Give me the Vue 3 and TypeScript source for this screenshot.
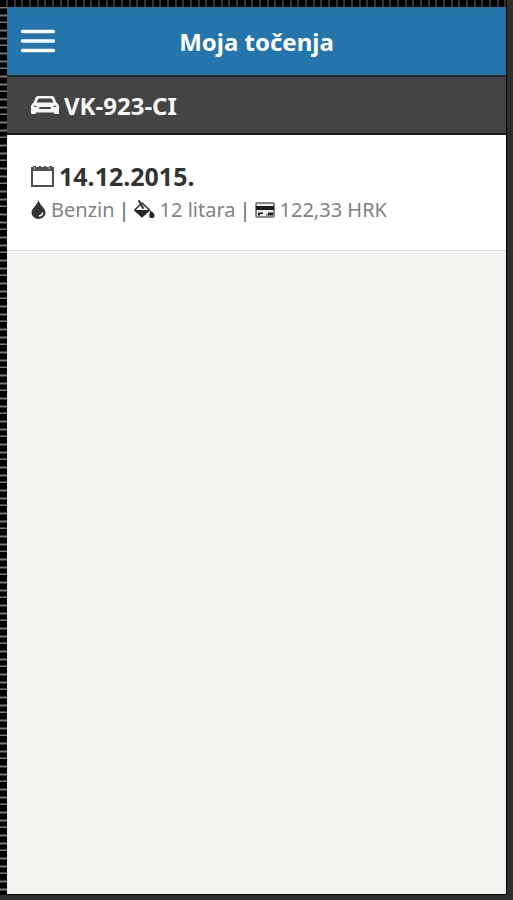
<script setup lang="ts">
import { ref } from 'vue'

interface Refill {
  date: string
  fuel: string
  amount: string
  price: string
}

const title = ref<string>('Moja točenja')
const plate = ref<string>('VK-923-CI')
const refills = ref<Refill[]>([
  { date: '14.12.2015.', fuel: 'Benzin', amount: '12 litara', price: '122,33 HRK' },
])
</script>

<template>
  <div class="frame">
    <div class="screen">
      <header class="bar">
        <button class="menu" type="button" aria-label="Menu">
          <svg width="34" height="24" viewBox="0 0 34 24" aria-hidden="true">
            <path d="M1.500 2.500h31M1.500 12h31M1.500 21.500h31" stroke="#fff" stroke-width="3.400" stroke-linecap="round" />
          </svg>
        </button>
        <h1>{{ title }}</h1>
      </header>
      <h2 class="vehicle">
        <svg width="28" height="20" viewBox="0 0 28 20" aria-hidden="true">
          <path fill="#f4f4f4" fill-rule="evenodd" d="M7 1h14q1.800 0 2.500 1.500l1.500 4.500 2 2q1 1 1 2.500V18q0 1-1 1h-3q-1 0-1-1v-.5H5v.5q0 1-1 1H1q-1 0-1-1v-6.500Q0 10 1 9l2-2 1.500-4.500Q5.200 1 7 1zM7.500 3.500L5.500 7.500h17l-2-4zM2.500 10.500q0 1.600 3.500 1.600 0-1.600-3.500-1.600zM25.500 10.500q-3.500 0-3.500 1.600 3.500 0 3.500-1.600zM9 12q-1 0-1 1t1 1h10q1 0 1-1t-1-1z" />
        </svg>
        <span>{{ plate }}</span>
      </h2>
      <main>
        <ul class="list">
          <li v-for="item in refills" :key="item.date" class="item">
            <h3 class="date">
              <svg width="23" height="23" viewBox="0 0 23 23" aria-hidden="true">
                <path fill="#505050" fill-rule="evenodd" d="M0 2h2V1h3v1h3V1h2v1h3V1h2v1h3V1h3v1h2v20H0zM2 6v14h19V6z" />
                <path fill="#ccc" d="M3 2h1v2H3zM18 2h1v2h-1z" />
              </svg>
              <span>{{ item.date }}</span>
            </h3>
            <p class="details">
              <span class="fact">
                <svg width="15" height="20" viewBox="0 0 15 20" aria-hidden="true">
                  <path fill="#333" d="M7.500 0C8.500 5 14.500 8 14.500 12.500A7 6.500 0 0 1 .5 12.500C.5 8 6.500 5 7.500 0z" />
                  <path d="M11.500 12.500q0 3-3.500 3.500" stroke="#fff" stroke-width="1.500" fill="none" />
                </svg>
                <span>{{ item.fuel }}</span>
              </span>
              <span class="divider">|</span>
              <span class="fact">
                <svg width="21" height="19" viewBox="0 0 21 19" aria-hidden="true">
                  <path fill="#fff" stroke="#333" stroke-width="1.700" stroke-linejoin="round" d="M8 3l7.500 7L8 16.500.8 10z" />
                  <path fill="#222" d="M1 10h14l-7 7z" />
                  <path d="M5 1l4 7" stroke="#333" stroke-width="2" stroke-linecap="round" />
                  <path fill="#222" d="M16 10.500c2 1 4.500 2.800 4.500 5a2.600 2.600 0 0 1-5.200 0c0-2 .9-3 .7-5z" />
                </svg>
                <span>{{ item.amount }}</span>
              </span>
              <span class="divider">|</span>
              <span class="fact">
                <svg width="20" height="16" viewBox="0 0 20 16" aria-hidden="true">
                  <rect x="1" y="1" width="18" height="14" rx="1" fill="#eee" stroke="#666" stroke-width="1.600" />
                  <path fill="#1c1c1c" d="M1 4h18v4H1zM3 10.500h5V12H5v1.500H3zM11 12.500h2v-2h5v3h-7z" />
                </svg>
                <span>{{ item.price }}</span>
              </span>
            </p>
          </li>
        </ul>
      </main>
    </div>
  </div>
</template>

<style>
body {
  margin: 0;
}
</style>

<style scoped>
.frame {
  box-sizing: border-box;
  display: flex;
  min-height: 100vh;
  padding: 7px 0 0 7px;
  border-right: 6px solid #2e2e2e;
  border-bottom: 5px solid #2e2e2e;
  background:
    repeating-linear-gradient(90deg, #000 0 6px, #666 7px, #000 8px 14px, #666 15px, #000 16px 21px, #666 22px, #000 23px) 0 0 / 100% 7px no-repeat,
    repeating-linear-gradient(#000 0 6px, #777 7px 8px, #000 9px 14px, #777 15px 16px, #000 17px 21px, #777 22px 23px) 0 0 / 7px 100% no-repeat;
  font-family: "Noto Sans", "Open Sans", sans-serif;
}

.screen {
  flex: 1;
  border-right: 1px solid #000;
  border-bottom: 1px solid #000;
  background: #f3f2ee;
}

.bar {
  display: grid;
  grid-template-columns: 34px 1fr 34px;
  align-items: center;
  height: 68px;
  padding: 0 14px;
  background: #2575ad;
  border-bottom: 2px solid #252b29;
}

.menu {
  display: flex;
  padding: 0;
  border: 0;
  background: none;
}

h1,
h2,
h3,
p,
ul {
  margin: 0;
}

h1 {
  padding-top: 2px;
  color: #fff;
  font-size: 24px;
  line-height: 32px;
  text-align: center;
}

.vehicle {
  display: flex;
  align-items: center;
  gap: 5px;
  height: 56px;
  padding: 0 24px;
  background: #444;
  border-bottom: 2px solid #1c1c1c;
  color: #f8f8f8;
  font-size: 24px;
}

.list {
  padding: 0;
  list-style: none;
}

.item {
  padding: 24px;
  background: #fff;
  border-bottom: 1px solid #ddd;
}

.date {
  display: flex;
  align-items: center;
  gap: 5px;
  color: #333;
  font-size: 25px;
  line-height: 34px;
}

.details {
  display: flex;
  align-items: center;
  gap: 4px;
  color: #828282;
  font-size: 20px;
  line-height: 33px;
  white-space: nowrap;
}

.fact {
  display: flex;
  align-items: center;
  gap: 5px;
}

.divider {
  color: #666;
}
</style>
